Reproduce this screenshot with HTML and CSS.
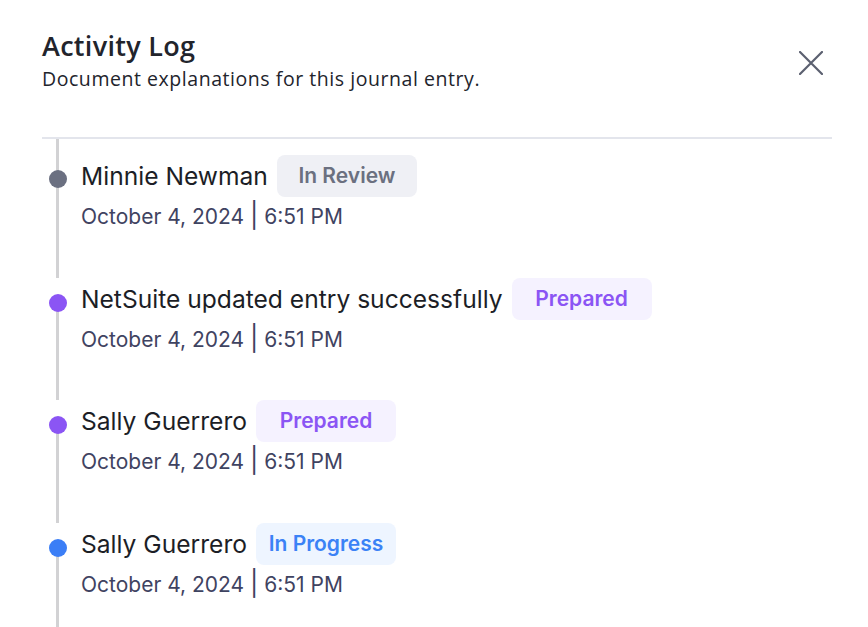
FILE: index.html
```html
<!DOCTYPE html>
<html lang="en">
<head>
    <meta charset="UTF-8">
    <meta name="viewport" content="width=device-width, initial-scale=1.0">
    <title>Activity Log</title>
    <link rel="stylesheet" href="styles.css">
</head>
<body>
    <div class="panel">
        <div class="panel-head">
            <div>
                <h1 class="title">Activity Log</h1>
                <p class="subtitle">Document explanations for this journal entry.</p>
            </div>
            <button class="close" aria-label="Close">
                <svg width="24" height="24" viewBox="0 0 24 24">
                    <path d="M1 1L23 23M23 1L1 23" stroke="#5b6070" stroke-width="2.2" stroke-linecap="round" fill="none"/>
                </svg>
            </button>
        </div>

        <ul class="log">
            <li class="entry">
                <div class="rail">
                    <span class="seg seg-top"></span>
                    <span class="dot dot-gray"></span>
                    <span class="seg"></span>
                </div>
                <div class="entry-body">
                    <div class="entry-title">
                        <span class="name">Minnie Newman</span>
                        <span class="badge badge-review">In Review</span>
                    </div>
                    <div class="date">October 4, 2024 <span class="bar">|</span> 6:51 PM</div>
                </div>
            </li>
            <li class="entry">
                <div class="rail">
                    <span class="dot dot-purple"></span>
                    <span class="seg"></span>
                </div>
                <div class="entry-body">
                    <div class="entry-title">
                        <span class="name">NetSuite updated entry successfully</span>
                        <span class="badge badge-prepared">Prepared</span>
                    </div>
                    <div class="date">October 4, 2024 <span class="bar">|</span> 6:51 PM</div>
                </div>
            </li>
            <li class="entry">
                <div class="rail">
                    <span class="dot dot-purple"></span>
                    <span class="seg"></span>
                </div>
                <div class="entry-body">
                    <div class="entry-title">
                        <span class="name">Sally Guerrero</span>
                        <span class="badge badge-prepared">Prepared</span>
                    </div>
                    <div class="date">October 4, 2024 <span class="bar">|</span> 6:51 PM</div>
                </div>
            </li>
            <li class="entry">
                <div class="rail">
                    <span class="dot dot-blue"></span>
                    <span class="seg"></span>
                </div>
                <div class="entry-body">
                    <div class="entry-title">
                        <span class="name">Sally Guerrero</span>
                        <span class="badge badge-progress">In Progress</span>
                    </div>
                    <div class="date">October 4, 2024 <span class="bar">|</span> 6:51 PM</div>
                </div>
            </li>
        </ul>
    </div>
</body>
</html>
```

FILE: styles.css
```css
*{
    margin: 0;
    padding: 0;
    box-sizing: border-box;
}
body{
    background-color: #ffffff;
    font-family: Inter, "Noto Sans", sans-serif;
    color: #1c1e26;
    overflow: hidden;
}
.panel{
    padding: 29px 36px 0 42px;
    height: 627px;
}
.panel-head{
    display: flex;
    justify-content: space-between;
    align-items: flex-start;
    padding-bottom: 46px;
    border-bottom: 2px solid #e3e5ec;
}
.title{
    font-family: "Open Sans", Lato, sans-serif;
    font-size: 27px;
    font-weight: 600;
    line-height: 34px;
    color: #22242c;
    letter-spacing: 0.3px;
}
.subtitle{
    font-family: "Open Sans", Lato, sans-serif;
    font-size: 19.5px;
    line-height: 24px;
    margin-top: 4px;
    letter-spacing: 0.55px;
    color: #22242c;
}
.close{
    background: none;
    border: none;
    margin-top: 22px;
    margin-right: 9px;
    width: 24px;
    height: 24px;
    cursor: pointer;
}
.log{
    list-style: none;
    padding-left: 7px;
}
.entry{
    display: flex;
    height: 122.5px;
}
.entry:first-child{
    height: 138.5px;
}
.rail{
    width: 18px;
    display: flex;
    flex-direction: column;
    align-items: center;
    padding-top: 16px;
}
.entry:first-child .rail{
    padding-top: 0;
}
.seg{
    width: 3px;
    margin-left: -1px;
    flex: 1;
    background-color: #d2d2d4;
}
.seg-top{
    flex: none;
    height: 32px;
    margin-bottom: -1px;
}
.dot{
    width: 18px;
    height: 18px;
    border-radius: 50%;
    flex: none;
    margin-bottom: -1px;
    position: relative;
}
.dot-gray{ background-color: #6b7081; }
.dot-purple{ background-color: #8b55f4; }
.dot-blue{ background-color: #3b7ef6; }
.entry-body{
    padding-left: 14px;
}
.entry:first-child .entry-body{
    padding-top: 16px;
}
.entry-title{
    display: flex;
    align-items: center;
    gap: 9px;
    height: 42px;
}
.name{
    font-size: 24.6px;
    color: #1c1e26;
    white-space: nowrap;
}
.badge{
    display: inline-block;
    height: 42px;
    line-height: 42px;
    border-radius: 8px;
    font-size: 21px;
    font-weight: 600;
    width: 140px;
    text-align: center;
    white-space: nowrap;
}
.badge-review{
    background-color: #eff0f5;
    color: #6b7080;
}
.badge-prepared{
    background-color: #f5f2ff;
    color: #8b55f4;
}
.badge-progress{
    background-color: #eef5ff;
    color: #3b82f6;
}
.date{
    margin-top: 5px;
    font-size: 21px;
    line-height: 26px;
    color: #3f4361;
}
.bar{
    font-size: 25px;
    color: #3f4361;
}
```
